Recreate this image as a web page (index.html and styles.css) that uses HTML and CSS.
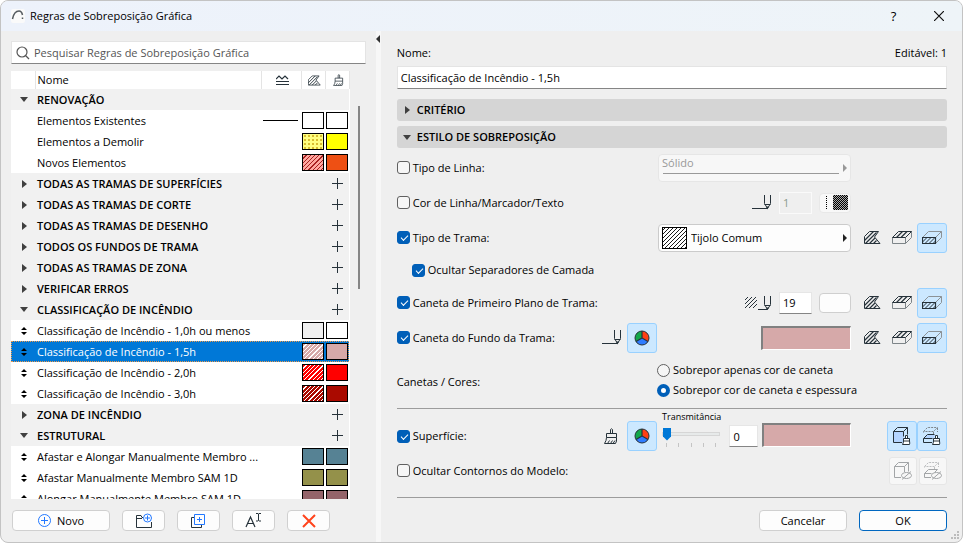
FILE: index.html
```html
<!DOCTYPE html>
<html lang="pt">
<head>
<meta charset="UTF-8">
<meta name="viewport" content="width=device-width, initial-scale=1.0">
<title>Regras de Sobreposição Gráfica</title>
<link rel="stylesheet" href="styles.css">
</head>
<body>
  <svg class="defs" width="0" height="0" aria-hidden="true">
    <defs>
      <pattern id="brick" width="4" height="4" patternUnits="userSpaceOnUse">
        <path d="M-1 1L1 -1M0 4L4 0M3 5L5 3" stroke="#000" stroke-width="0.9"/>
      </pattern>
    </defs>
    <symbol id="i-down" viewBox="0 0 8 5"><path d="M0 0h8L4 5z" fill="#404040"/></symbol>
    <symbol id="i-right" viewBox="0 0 5 8"><path d="M0 0v8L5 4z" fill="#404040"/></symbol>
    <symbol id="i-sort" viewBox="0 0 6 8"><path d="M0 3L3 0L6 3zM0 5L3 8L6 5z" fill="#000"/></symbol>
    <symbol id="i-plus" viewBox="0 0 11 11"><path d="M5.500 0v11M0 5.500h11" stroke="#26323a"/></symbol>
    <symbol id="i-lines" viewBox="0 0 13 10"><path d="M0 4L3 1L6 4L9 1L12 4M0 6.500h13M0 9.500h13" fill="none" stroke="#26323a" stroke-width="1.200"/></symbol>
    <symbol id="i-fill" viewBox="0 0 17 13">
      <path d="M.5 12.500v-7l5-5h9l-4 5.500l5.500 6.500z" fill="none" stroke="#26323a"/>
      <path d="M.5 9.500l9-9M1.500 12.500l11-11M5.500 12.500l5.500-5.500M9.500 12.500l3-3" fill="none" stroke="#26323a" stroke-width="1.200"/>
    </symbol>
    <symbol id="i-top" viewBox="0 0 20 13">
      <path d="M.5 6.500v6h13v-6M13.500 12.500l6-6v-6" fill="none" stroke="#7d8488"/>
      <path d="M.5 6.500l6-6h13l-6 6z" fill="none" stroke="#26323a"/>
      <path d="M4.500 6.500l6-6M9 6.500l6-6" stroke="#26323a" stroke-width="1.200"/>
    </symbol>
    <symbol id="i-front" viewBox="0 0 20 13">
      <path d="M.5 6.500l6-6h13l-6 6M13.500 12.500l6-6v-6" fill="none" stroke="#8c9296"/>
      <path d="M.5 6.500h13v6h-13z" fill="none" stroke="#26323a" stroke-width="1.200"/>
      <path d="M.5 11l4.500-4.500M3 12.500l6-6M7 12.500l6-6M11 12.500l2.500-2.500" stroke="#26323a"/>
    </symbol>
    <symbol id="i-pen" viewBox="0 0 20 15"><path d="M0 13.500h15M12.500 0v8.500l3 5l3-5V0M12.500 9.500h6" fill="none" stroke="#26323a"/><path d="M14 11.500h3l-1.500 3z" fill="#26323a"/></symbol>
    <symbol id="i-hatchpen" viewBox="0 0 28 15">
      <path d="M1 5l3-3M1 9l7-7M1 13l11-11M5 13l8-8M9 13l4-4" stroke="#26323a"/>
      <path d="M14 14.500h9M20.500 1v8.500l3 5l3-5V1M20.500 10.500h6" fill="none" stroke="#26323a"/><path d="M22 12.500h3l-1.500 2.500z" fill="#26323a"/>
    </symbol>
    <symbol id="i-brush" viewBox="0 0 14 16"><path d="M6.500 5.500V1.500q1-1.500 2 0v4M2.500 5.500h10v4h-10zM2.500 9.500q0 3-2 6h11q1.500-2 1-6M3.500 15.500l2-3M6.500 15.500l2-3M9 15.500l2-3" fill="none" stroke="#26323a"/></symbol>
    <symbol id="i-pie" viewBox="0 0 16 16">
      <path d="M8 8V1a7 7 0 0 1 6 10.500z" fill="#ff3f14"/>
      <path d="M8 8V1a7 7 0 0 0-6 10.500z" fill="#12a84a"/>
      <path d="M8 8l6 3.500a7 7 0 0 1-12 0z" fill="#2f7cff"/>
      <path d="M8 1v7l6 3.500M8 8l-6 3.500" fill="none" stroke="#26323a" stroke-width="1.200"/>
      <circle cx="8" cy="8" r="7" fill="none" stroke="#26323a"/>
    </symbol>
    <symbol id="i-cubebrush" viewBox="0 0 18 18">
      <path d="M.5 4.500h10v11h-10z" fill="#b5d5ff"/>
      <path d="M9 15.500H.5v-11h10v5M.5 4.500l4-4h10v7M10.500 4.500l4-4" fill="none" stroke="#26323a"/>
      <path d="M12.500 11.500V8.500h2v3M10.500 11.500h6v2.500h-6zM10.500 14q0 2-1 3.500h7q.5-1 0-3.500" fill="#fff" stroke="#26323a"/>
    </symbol>
    <symbol id="i-slabbrush" viewBox="0 0 18 18">
      <path d="M.5 5.500v-1h10l4-4h-10l-4 4M14.500 1v4M10.500 5v3" fill="none" stroke="#7d858a" stroke-dasharray="2 1"/>
      <path d="M1 11.500l3-3.500h8l-2 3.500z" fill="#b5d5ff"/>
      <path d="M9 15.500H.5v-4h9M.5 11.500l4-4h7" fill="none" stroke="#26323a"/>
      <path d="M12.500 11.500V8.500h2v3M10.500 11.500h6v2.500h-6zM10.500 14q0 2-1 3.500h7q.5-1 0-3.500" fill="#fff" stroke="#26323a"/>
    </symbol>
    <symbol id="i-cubeoff" viewBox="0 0 18 18">
      <path d="M7 15.500H.5v-11h10v5.500M.5 4.500l4-4h10v9M10.500 4.500l4-4" fill="none" stroke="#a2a5a7"/>
      <ellipse cx="12.500" cy="13.500" rx="5" ry="3" fill="none" stroke="#a2a5a7"/><path d="M8 17.500l9-8" stroke="#a2a5a7"/>
    </symbol>
    <symbol id="i-slaboff" viewBox="0 0 18 18">
      <path d="M.5 5.500v-1h10l4-4h-10l-4 4M14.500 1v4M10.500 5v3" fill="none" stroke="#bdbfc0" stroke-dasharray="2 1"/>
      <path d="M7 15.500H.5v-4h7M.5 11.500l4-4h9l-3 3" fill="none" stroke="#a2a5a7"/>
      <ellipse cx="12.500" cy="13.500" rx="5" ry="3" fill="none" stroke="#a2a5a7"/><path d="M8 17.500l9-8" stroke="#a2a5a7"/>
    </symbol>
  </svg>

  <div class="dialog">
    <header class="titlebar">
      <svg class="logo" width="14" height="14" viewBox="0 0 14 14"><rect width="14" height="14" rx="2" fill="#fafafa"/><path d="M1.500 10C2.500 5 5 2 8 2c2 0 3 1.500 3.500 4" fill="none" stroke="#555b60" stroke-width="1.500"/><path d="M11.500 8.500v1.500" stroke="#555b60" stroke-width="1.500"/></svg>
      <h1>Regras de Sobreposição Gráfica</h1>
      <button type="button" class="win-btn" aria-label="Ajuda">?</button>
      <button type="button" class="win-btn" aria-label="Fechar"><svg width="10" height="10" viewBox="0 0 10 10"><path d="M0 0L10 10M10 0L0 10" stroke="#111" stroke-width="1.200"/></svg></button>
    </header>

    <main class="panes">
      <section class="left">
        <div class="search">
          <svg width="14" height="14" viewBox="0 0 14 14"><circle cx="6" cy="6" r="5" fill="none" stroke="#555" stroke-width="1.200"/><path d="M9.500 9.500L13 13" stroke="#555" stroke-width="1.200"/></svg>
          <input type="text" placeholder="Pesquisar Regras de Sobreposição Gráfica" aria-label="Pesquisar">
        </div>
        <div class="list">
          <div class="list-view">
            <table>
              <colgroup><col class="c-arrow"><col><col class="c-line"><col class="c-fill"><col class="c-fill"></colgroup>
              <thead>
                <tr>
                  <th></th><th>Nome</th>
                  <th><svg width="13" height="10"><use href="#i-lines"/></svg></th>
                  <th><svg width="13" height="11"><use href="#i-fill"/></svg></th>
                  <th><svg width="11" height="12"><use href="#i-brush"/></svg></th>
                </tr>
              </thead>
              <tbody>
                <tr class="group"><td><svg width="8" height="5"><use href="#i-down"/></svg></td><td colspan="3">RENOVAÇÃO</td><td></td></tr>
                <tr><td></td><td>Elementos Existentes</td><td><i class="stroke"></i></td><td><i class="sw white"></i></td><td><i class="sw white"></i></td></tr>
                <tr><td></td><td>Elementos a Demolir</td><td></td><td><i class="sw dots"></i></td><td><i class="sw yellow"></i></td></tr>
                <tr><td></td><td>Novos Elementos</td><td></td><td><i class="sw hatch-new"></i></td><td><i class="sw orange"></i></td></tr>
                <tr class="group"><td><svg width="5" height="8"><use href="#i-right"/></svg></td><td colspan="3">TODAS AS TRAMAS DE SUPERFÍCIES</td><td><svg width="11" height="11"><use href="#i-plus"/></svg></td></tr>
                <tr class="group"><td><svg width="5" height="8"><use href="#i-right"/></svg></td><td colspan="3">TODAS AS TRAMAS DE CORTE</td><td><svg width="11" height="11"><use href="#i-plus"/></svg></td></tr>
                <tr class="group"><td><svg width="5" height="8"><use href="#i-right"/></svg></td><td colspan="3">TODAS AS TRAMAS DE DESENHO</td><td><svg width="11" height="11"><use href="#i-plus"/></svg></td></tr>
                <tr class="group"><td><svg width="5" height="8"><use href="#i-right"/></svg></td><td colspan="3">TODOS OS FUNDOS DE TRAMA</td><td><svg width="11" height="11"><use href="#i-plus"/></svg></td></tr>
                <tr class="group"><td><svg width="5" height="8"><use href="#i-right"/></svg></td><td colspan="3">TODAS AS TRAMAS DE ZONA</td><td><svg width="11" height="11"><use href="#i-plus"/></svg></td></tr>
                <tr class="group"><td><svg width="5" height="8"><use href="#i-right"/></svg></td><td colspan="3">VERIFICAR ERROS</td><td><svg width="11" height="11"><use href="#i-plus"/></svg></td></tr>
                <tr class="group"><td><svg width="8" height="5"><use href="#i-down"/></svg></td><td colspan="3">CLASSIFICAÇÃO DE INCÊNDIO</td><td><svg width="11" height="11"><use href="#i-plus"/></svg></td></tr>
                <tr><td><svg width="6" height="8"><use href="#i-sort"/></svg></td><td>Classificação de Incêndio - 1,0h ou menos</td><td></td><td><i class="sw light"></i></td><td><i class="sw white"></i></td></tr>
                <tr class="selected"><td><svg width="6" height="8"><use href="#i-sort"/></svg></td><td>Classificação de Incêndio - 1,5h</td><td></td><td><i class="sw pink hatched"></i></td><td><i class="sw pink"></i></td></tr>
                <tr><td><svg width="6" height="8"><use href="#i-sort"/></svg></td><td>Classificação de Incêndio - 2,0h</td><td></td><td><i class="sw red hatched"></i></td><td><i class="sw red"></i></td></tr>
                <tr><td><svg width="6" height="8"><use href="#i-sort"/></svg></td><td>Classificação de Incêndio - 3,0h</td><td></td><td><i class="sw darkred hatched"></i></td><td><i class="sw darkred"></i></td></tr>
                <tr class="group"><td><svg width="5" height="8"><use href="#i-right"/></svg></td><td colspan="3">ZONA DE INCÊNDIO</td><td><svg width="11" height="11"><use href="#i-plus"/></svg></td></tr>
                <tr class="group"><td><svg width="8" height="5"><use href="#i-down"/></svg></td><td colspan="3">ESTRUTURAL</td><td><svg width="11" height="11"><use href="#i-plus"/></svg></td></tr>
                <tr><td><svg width="6" height="8"><use href="#i-sort"/></svg></td><td>Afastar e Alongar Manualmente Membro ...</td><td></td><td><i class="sw teal"></i></td><td><i class="sw teal"></i></td></tr>
                <tr><td><svg width="6" height="8"><use href="#i-sort"/></svg></td><td>Afastar Manualmente Membro SAM 1D</td><td></td><td><i class="sw olive"></i></td><td><i class="sw olive"></i></td></tr>
                <tr><td><svg width="6" height="8"><use href="#i-sort"/></svg></td><td>Alongar Manualmente Membro SAM 1D</td><td></td><td><i class="sw plum"></i></td><td><i class="sw plum"></i></td></tr>
              </tbody>
            </table>
          </div>
          <div class="scrollbar"></div>
        </div>
        <div class="actions">
          <button type="button" class="btn new"><svg width="13" height="13" viewBox="0 0 13 13"><circle cx="6.500" cy="6.500" r="6" fill="none" stroke="#2278ff"/><path d="M6.500 3v7M3 6.500h7" stroke="#2278ff"/></svg>Novo</button>
          <button type="button" class="btn icon" aria-label="Nova pasta"><svg width="18" height="16" viewBox="0 0 18 16"><path d="M8 4.500H7l-1-2H1.500v12h15V9M1.500 5.500H7" fill="none" stroke="#26323a"/><circle cx="12.500" cy="5" r="4" fill="#fff" stroke="#2278ff"/><path d="M12.500 2.500v5M10 5h5" stroke="#2278ff"/></svg></button>
          <button type="button" class="btn icon" aria-label="Duplicar"><svg width="15" height="15" viewBox="0 0 15 15"><path d="M3.500 4.500h-3v10h10v-3" fill="none" stroke="#26323a"/><path d="M3.500 1.500h10v10h-10zM8.500 4v5M6 6.500h5" fill="none" stroke="#2278ff"/></svg></button>
          <button type="button" class="btn icon" aria-label="Renomear"><svg width="17" height="15" viewBox="0 0 17 15"><path d="M1 14L5.500 4L10 14M2.500 10.500h6" fill="none" stroke="#26323a" stroke-width="1.200"/><path d="M11 .5h2l.5.5l.5-.5h2M13.500 1v6.500M11 8h2l.5-.5l.5.5h2" fill="none" stroke="#26323a"/></svg></button>
          <button type="button" class="btn icon" aria-label="Eliminar"><svg width="14" height="14" viewBox="0 0 14 14"><path d="M1 1L13 13M13 1L1 13" stroke="#ff431c" stroke-width="2"/></svg></button>
        </div>
      </section>

      <div class="splitter"><svg width="4" height="8" viewBox="0 0 4 8"><path d="M4 0v8L0 4z" fill="#303030"/></svg></div>

      <section class="right">
        <div class="name-head"><label for="name">Nome:</label><span>Editável: 1</span></div>
        <input type="text" id="name" class="name-field" value="Classificação de Incêndio - 1,5h">
        <button type="button" class="section"><svg width="10" height="8"><use href="#i-right" x="2" width="5" height="8"/></svg>CRITÉRIO</button>
        <button type="button" class="section"><svg width="10" height="5"><use href="#i-down" width="8" height="5"/></svg>ESTILO DE SOBREPOSIÇÃO</button>

        <div class="row first">
          <label class="check"><input type="checkbox">Tipo de Linha:</label>
          <div class="picker">
            <div class="combo line-type">
              <select disabled aria-label="Tipo de linha"><option>Sólido</option></select>
              <svg class="caret" width="4" height="8" viewBox="0 0 4 8"><path d="M0 0v8L4 4z" fill="#999"/></svg>
            </div>
          </div>
          <div class="tools"></div>
        </div>

        <div class="row">
          <label class="check"><input type="checkbox">Cor de Linha/Marcador/Texto</label>
          <div class="picker">
            <svg width="20" height="15"><use href="#i-pen"/></svg>
            <input type="text" class="num" value="1" disabled aria-label="Caneta de linha">
            <button type="button" class="pen-color" disabled aria-label="Cor da caneta"><i class="dotline"></i><i class="checker"></i></button>
          </div>
          <div class="tools"></div>
        </div>

        <div class="row">
          <label class="check"><input type="checkbox" checked>Tipo de Trama:</label>
          <div class="picker">
            <div class="combo fill-type">
              <svg class="preview" width="25" height="22"><rect x=".5" y=".5" width="24" height="21" fill="#fff"/><rect x=".5" y=".5" width="24" height="21" fill="url(#brick)" stroke="#000"/></svg>
              <select aria-label="Tipo de trama"><option>Tijolo Comum</option></select>
              <svg class="caret" width="4" height="8" viewBox="0 0 4 8"><path d="M0 0v8L4 4z" fill="#222"/></svg>
            </div>
          </div>
          <div class="tools">
            <button type="button" class="tool" aria-label="Desenho"><svg width="17" height="13"><use href="#i-fill"/></svg></button>
            <button type="button" class="tool" aria-label="Superfície"><svg width="20" height="13"><use href="#i-top"/></svg></button>
            <button type="button" class="tool on" aria-label="Corte"><svg width="20" height="13"><use href="#i-front"/></svg></button>
          </div>
        </div>

        <div class="row sub">
          <label class="check"><input type="checkbox" checked>Ocultar Separadores de Camada</label>
        </div>

        <div class="row">
          <label class="check"><input type="checkbox" checked>Caneta de Primeiro Plano de Trama:</label>
          <div class="picker">
            <svg width="28" height="15"><use href="#i-hatchpen"/></svg>
            <input type="text" class="num" value="19" aria-label="Caneta de primeiro plano">
            <button type="button" class="pen-color blank" aria-label="Cor da caneta"></button>
          </div>
          <div class="tools">
            <button type="button" class="tool" aria-label="Desenho"><svg width="17" height="13"><use href="#i-fill"/></svg></button>
            <button type="button" class="tool" aria-label="Superfície"><svg width="20" height="13"><use href="#i-top"/></svg></button>
            <button type="button" class="tool on" aria-label="Corte"><svg width="20" height="13"><use href="#i-front"/></svg></button>
          </div>
        </div>

        <div class="row">
          <label class="check"><input type="checkbox" checked>Caneta do Fundo da Trama:</label>
          <svg class="mode" width="20" height="15"><use href="#i-pen"/></svg>
          <button type="button" class="tool on" aria-label="Cor personalizada"><svg width="16" height="16"><use href="#i-pie"/></svg></button>
          <div class="picker"><button type="button" class="well" aria-label="Cor do fundo"></button></div>
          <div class="tools">
            <button type="button" class="tool" aria-label="Desenho"><svg width="17" height="13"><use href="#i-fill"/></svg></button>
            <button type="button" class="tool" aria-label="Superfície"><svg width="20" height="13"><use href="#i-top"/></svg></button>
            <button type="button" class="tool on" aria-label="Corte"><svg width="20" height="13"><use href="#i-front"/></svg></button>
          </div>
        </div>

        <div class="row pens">
          <span class="caption">Canetas / Cores:</span>
          <div class="radios">
            <label><input type="radio" name="pens">Sobrepor apenas cor de caneta</label>
            <label><input type="radio" name="pens" checked>Sobrepor cor de caneta e espessura</label>
          </div>
        </div>

        <hr>

        <div class="row surface">
          <label class="check"><input type="checkbox" checked>Superfície:</label>
          <svg class="mode" width="14" height="16"><use href="#i-brush"/></svg>
          <button type="button" class="tool on" aria-label="Cor personalizada"><svg width="16" height="16"><use href="#i-pie"/></svg></button>
          <div class="picker">
            <div class="slider">
              <label for="trans">Transmitância</label>
              <input type="range" id="trans" min="0" max="100" value="0">
              <div class="ticks"><i></i><i></i><i></i><i></i><i></i></div>
            </div>
            <input type="text" class="num small" value="0" aria-label="Valor de transmitância">
            <button type="button" class="well" aria-label="Cor da superfície"></button>
          </div>
          <div class="tools">
            <button type="button" class="tool on" aria-label="Não cortadas"><svg width="18" height="18"><use href="#i-cubebrush"/></svg></button>
            <button type="button" class="tool on" aria-label="Cortadas"><svg width="18" height="18"><use href="#i-slabbrush"/></svg></button>
          </div>
        </div>

        <div class="row">
          <label class="check"><input type="checkbox">Ocultar Contornos do Modelo:</label>
          <div class="tools">
            <button type="button" class="tool off" disabled aria-label="Não cortados"><svg width="18" height="18"><use href="#i-cubeoff"/></svg></button>
            <button type="button" class="tool off" disabled aria-label="Cortados"><svg width="18" height="18"><use href="#i-slaboff"/></svg></button>
          </div>
        </div>

        <footer class="footer">
          <button type="button" class="btn">Cancelar</button>
          <button type="submit" class="btn primary">OK</button>
        </footer>
      </section>
    </main>
    <svg class="grip" width="9" height="9" viewBox="0 0 9 9"><path d="M6 0h2v2h-2zM3 3h2v2h-2zM6 3h2v2h-2zM0 6h2v2h-2zM3 6h2v2h-2zM6 6h2v2h-2z" fill="#bcbcbc"/></svg>
  </div>
</body>
</html>
```
FILE: styles.css
```css
* {
  box-sizing: border-box;
}

body {
  margin: 0;
  background-color: #fff;
  font-family: "Open Sans", "Noto Sans", sans-serif;
  font-size: 11px;
  line-height: 16px;
  color: #000;
}

button,
input,
select {
  margin: 0;
  font: inherit;
  color: inherit;
}

svg {
  display: block;
  flex: none;
}

.defs {
  position: absolute;
}

.dialog {
  position: relative;
  display: flex;
  flex-direction: column;
  height: 100vh;
  border: 1px solid #c3c3c3;
  border-radius: 8px;
  background-color: #efefef;
  overflow: hidden;
}

/* title bar */
.titlebar {
  display: flex;
  align-items: center;
  height: 30px;
  padding: 0 1px 0 10px;
  background: linear-gradient(to right, #edf2fb, #eef4f8);
}

.titlebar h1 {
  flex: 1;
  margin: 0 0 0 5px;
  font-size: 11px;
  font-weight: normal;
}

.win-btn {
  display: flex;
  align-items: center;
  justify-content: center;
  width: 45px;
  height: 30px;
  padding: 0;
  border: none;
  background: none;
  font-size: 13px;
}

.panes {
  flex: 1;
  display: flex;
  min-height: 0;
}

/* left pane */
.left {
  display: flex;
  flex-direction: column;
  flex: 0 0 39%;
  padding: 10px 10px 11px;
}

.search {
  display: flex;
  align-items: center;
  gap: 4px;
  height: 23px;
  padding-left: 4px;
  border: 1px solid #e4e4e4;
  border-bottom-color: #858585;
  background-color: #fff;
}

.search input {
  flex: 1;
  border: none;
  padding: 0;
  outline: none;
  background: none;
}

.search input::placeholder {
  color: #555;
  opacity: 1;
}

.list {
  flex: 1;
  display: flex;
  min-height: 0;
  margin: 7px 6px 11px 0;
}

.list-view {
  flex: 1;
  overflow: hidden;
  background-color: #fff;
}

.scrollbar {
  width: 2px;
  height: 183px;
  margin: 35px 0 0 8px;
  background-color: #858585;
}

table {
  width: 100%;
  table-layout: fixed;
  border-collapse: collapse;
}

.c-arrow {
  width: 24px;
}

.c-line {
  width: 40px;
}

.c-fill {
  width: 24px;
}

th {
  height: 18px;
  padding: 0 0 0 2px;
  border-right: 1px solid #e4e4e4;
  font-weight: normal;
  text-align: left;
}

th svg {
  margin: 0 auto;
}

td {
  height: 21px;
  padding: 0 0 0 2px;
  white-space: nowrap;
}

td:first-child svg {
  margin: 0 auto;
}

td:nth-child(n+3) {
  padding: 0;
}

.group {
  background-color: #f1f1f1;
  font-weight: 600;
}

.group td:last-child svg {
  margin: 0 auto;
}

.selected {
  background-color: #0078d7;
  color: #fff;
  outline: 1px dotted #ee9a4a;
  outline-offset: -1px;
}

.stroke {
  display: block;
  width: 35px;
  height: 1px;
  margin-left: 2px;
  background-color: #000;
}

.sw {
  display: block;
  width: 22px;
  height: 17px;
  margin-left: 1px;
  border: 1px solid #000;
}

.white { background-color: #fff; }
.light { background-color: #f0f0f0; }
.yellow { background-color: #ffff00; }
.orange { background-color: #ee5014; }
.pink { background-color: #d6a9a9; }
.red { background-color: #ff0000; }
.darkred { background-color: #aa0a00; }
.teal { background-color: #568294; }
.olive { background-color: #94914a; }
.plum { background-color: #94646a; }

.dots {
  background-color: #ffff80;
  background-image: radial-gradient(#d8bd30 1px, transparent 1px);
  background-size: 4px 4px;
}

.hatched {
  background-image: repeating-linear-gradient(135deg, transparent 0 2px, #fff 2px 3px);
}

.hatch-new {
  background: repeating-linear-gradient(135deg, #ffa8a0 0 2px, #a82020 2px 3px);
}

/* buttons */
.btn {
  display: flex;
  align-items: center;
  justify-content: center;
  width: 88px;
  height: 21px;
  padding: 0;
  border: 1px solid #d0d0d0;
  border-radius: 4px;
  background-color: #fdfdfd;
}

.btn.new {
  width: 98px;
  gap: 6px;
}

.btn.icon {
  width: 43px;
}

.btn.primary {
  border-color: #0067c0;
}

.actions {
  display: flex;
  gap: 12px;
  padding-left: 1px;
}

.splitter {
  width: 5px;
  padding-top: 4px;
  background-color: #f7f7f7;
}

/* right pane */
.right {
  flex: 1;
  display: flex;
  flex-direction: column;
  padding: 14px 15px 11px 16px;
}

.name-head {
  display: flex;
  justify-content: space-between;
}

.name-field {
  width: 100%;
  height: 23px;
  margin: 5px 0 10px;
  padding: 0 3px;
  border: 1px solid #e4e4e4;
  border-bottom-color: #858585;
  background-color: #fff;
}

.section {
  display: flex;
  align-items: center;
  gap: 4px;
  height: 22px;
  margin-bottom: 5px;
  padding: 0 6px;
  border: none;
  border-radius: 3px;
  background-color: #d5d5d5;
  font-weight: 600;
}

.row {
  display: flex;
  align-items: center;
  height: 35px;
}

.row.first {
  margin-top: -3px;
}

.row.sub {
  height: 30px;
  padding-left: 15px;
}

.check {
  flex: 1;
  display: flex;
  align-items: center;
  gap: 3px;
}

input[type="checkbox"],
input[type="radio"] {
  appearance: none;
  width: 13px;
  height: 13px;
  border: 1px solid #606060;
  border-radius: 3px;
  background-color: #f6f6f6;
}

input[type="checkbox"]:checked {
  border-color: #005fb8;
  background-color: #005fb8;
}

input[type="checkbox"]:checked::after {
  content: "";
  display: block;
  width: 6px;
  height: 3px;
  margin: 3px 0 0 3px;
  border: solid #fff;
  border-width: 0 0 1px 1px;
  transform: rotate(-45deg);
}

input[type="radio"] {
  border-radius: 50%;
}

input[type="radio"]:checked {
  border: 4px solid #005fb8;
  background-color: #fff;
}

.mode {
  margin-right: 5px;
}

.surface .mode {
  margin: 0 9px 7px 0;
}

.picker {
  display: flex;
  align-items: center;
  justify-content: flex-end;
  width: 194px;
}

.tools {
  display: flex;
  justify-content: flex-end;
  width: 96px;
}

.tool {
  display: flex;
  align-items: center;
  justify-content: center;
  width: 30px;
  height: 30px;
  padding: 0;
  border: 1px solid transparent;
  border-radius: 3px;
  background: none;
}

.tool.on {
  border-color: #99d1ff;
  background-color: #cce8ff;
}

.tool.off {
  width: 28px;
  height: 28px;
  margin-left: 2px;
  border-color: #e6e6e6;
  background-color: #f7f7f7;
}

.combo {
  position: relative;
  width: 193px;
}

.combo select {
  display: block;
  appearance: none;
  width: 100%;
  height: 28px;
  border: 1px solid #cbcbcb;
  border-radius: 4px;
  background-color: #fdfdfd;
}

.line-type select {
  padding: 0 3px 13px;
  border-color: #e6e6e6;
  background-color: #f7f7f7;
  color: #999;
  opacity: 1;
}

.line-type::after {
  content: "";
  position: absolute;
  left: 5px;
  right: 12px;
  bottom: 8px;
  height: 1px;
  background-color: #999;
}

.fill-type select {
  padding: 0 4px 0 32px;
}

.preview {
  position: absolute;
  top: 3px;
  left: 4px;
}

.caret {
  position: absolute;
  top: 10px;
  right: 4px;
}

.num {
  width: 33px;
  height: 22px;
  margin: 0 7px;
  padding: 0 3px;
  border: 1px solid #e6e6e6;
  border-bottom-color: #858585;
  background-color: #fff;
}

.num:disabled {
  border-color: #fafafa;
  background-color: #efefef;
  color: #8a9a8a;
}

.num.small {
  width: 29px;
  margin: 0 4px 0 8px;
}

.pen-color {
  display: flex;
  align-items: center;
  justify-content: flex-end;
  gap: 6px;
  width: 32px;
  height: 20px;
  padding: 0 2px;
  border: 1px solid #e8e8e8;
  border-radius: 4px;
  background-color: #f8f8f8;
}

.pen-color.blank {
  border-color: #cfcfcf;
  background-color: #fdfdfd;
}

.dotline {
  width: 1px;
  height: 13px;
  background: repeating-linear-gradient(#000 0 1px, transparent 1px 2px);
}

.checker {
  width: 15px;
  height: 15px;
  background: repeating-conic-gradient(#000 0 25%, #aaa 0 50%) 0 0 / 2px 2px;
}

.well {
  width: 90px;
  height: 24px;
  padding: 0;
  border: 2px solid #fff;
  border-top-color: #808080;
  border-left-color: #808080;
  border-width: 2px 1px 1px 2px;
  background-color: #d6a9a9;
}

.pens {
  align-items: flex-start;
  height: 53px;
  padding-top: 5px;
}

.caption {
  flex: 1;
  line-height: 44px;
}

.radios {
  width: 290px;
}

.radios label {
  display: flex;
  align-items: center;
  gap: 3px;
  height: 20px;
}

hr {
  width: 100%;
  margin: 0;
  border: none;
  border-top: 1px solid #9c9c9c;
}

.surface {
  align-items: flex-end;
  height: 44px;
  padding-bottom: 2px;
}

.surface .check {
  height: 30px;
}

.surface .picker {
  align-items: flex-end;
}

.surface .num,
.surface .well {
  margin-bottom: 4px;
}

.slider {
  flex: 1;
  padding: 0 0 4px 5px;
}

.slider label {
  display: block;
  height: 16px;
  font-size: 9px;
  line-height: 12px;
}

.slider input {
  appearance: none;
  display: block;
  width: 58px;
  height: 13px;
  background: none;
}

.slider input::-webkit-slider-runnable-track {
  height: 4px;
  border: 1px solid #d6d6d6;
  background-color: #e7eaea;
}

.slider input::-webkit-slider-thumb {
  appearance: none;
  width: 8px;
  height: 13px;
  margin-top: -5px;
  background-color: #0078d7;
  clip-path: polygon(0 0, 100% 0, 100% 70%, 50% 100%, 0 70%);
}

.ticks {
  display: flex;
  justify-content: space-between;
  width: 50px;
  margin: 3px 0 0 4px;
}

.ticks i {
  width: 1px;
  height: 4px;
  background-color: #c4c4c4;
}

/* footer */
.footer {
  display: flex;
  justify-content: flex-end;
  gap: 12px;
  margin-top: auto;
  padding-top: 12px;
  border-top: 1px solid #9c9c9c;
}

.grip {
  position: absolute;
  right: 2px;
  bottom: 2px;
}
```
